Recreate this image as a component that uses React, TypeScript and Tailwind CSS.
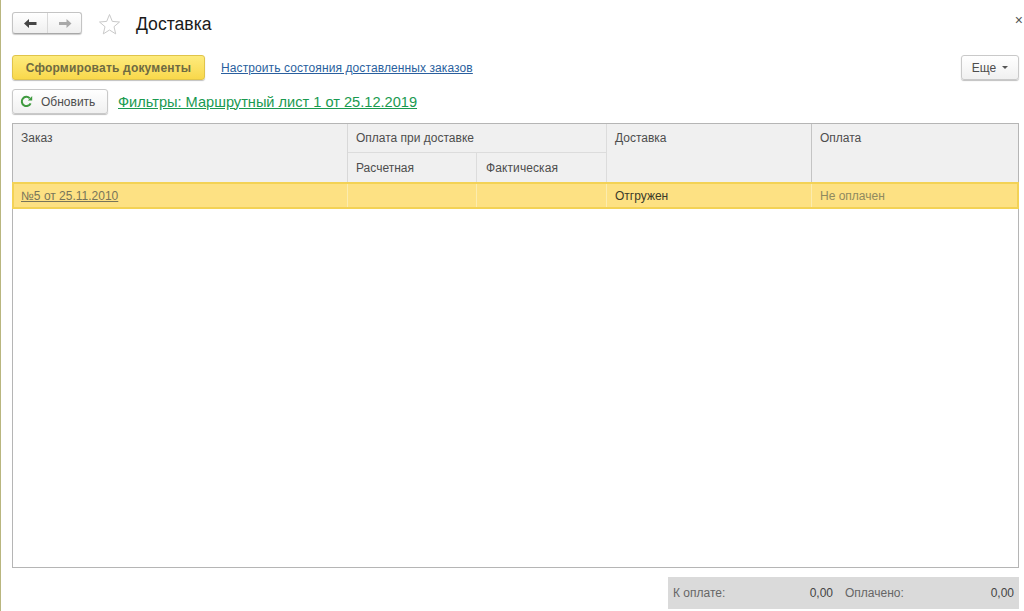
import React from "react";

const font = { fontFamily: '"Liberation Sans", Arial, sans-serif' };

export default function App() {
  return (
    <div
      className="w-[1024px] h-[611px] overflow-hidden bg-white border-l border-l-[#b9b67f] flex flex-col pl-[11px] pr-[4px] font-['Liberation_Sans',sans-serif] text-[12px] text-[#4d4d4d]"
      style={font}
    >
      {/* Title row */}
      <div className="h-[46px] pt-[12px] flex items-start relative shrink-0">
        <div className="flex h-[22px] w-[70px] rounded-[3px] border border-[#c4c4c4] border-b-[#a8a8a8] bg-gradient-to-b from-white to-[#efefef] shadow-[0_1px_1px_rgba(0,0,0,0.2)]">
          <div className="w-[35px] flex items-center justify-center border-r border-r-[#d9d9d9]">
            <svg width="14" height="11" viewBox="0 0 14 11"><path d="M1 5.5L6 1v3h7.5v3H6v3z" fill="#454545" /></svg>
          </div>
          <div className="flex-1 flex items-center justify-center">
            <svg width="14" height="11" viewBox="0 0 14 11"><path d="M13.5 5.5L8.5 1v3H1v3h7.5v3z" fill="#a9a9a9" /></svg>
          </div>
        </div>
        <svg className="ml-[16px] mt-[1px]" width="23" height="22" viewBox="0 0 23 22">
          <path d="M11.5 1.5l2.8 6.9 7.2.6-5.5 4.7 1.7 7.2-6.2-3.9-6.2 3.9 1.7-7.2L1.5 9l7.2-.6z" fill="#fff" stroke="#c9c9c9" strokeWidth="1" />
        </svg>
        <div className="ml-[15px] text-[17.6px] leading-[24px] text-[#1a1a1a]">Доставка</div>
        <div className="absolute -right-[3px] top-[13px] text-[14px] leading-[14px] text-[#555]">×</div>
      </div>

      {/* Command row */}
      <div className="h-[25px] mt-[9px] flex items-center shrink-0 pr-[1px]">
        <button className="w-[193px] h-[25px] rounded-[3px] border border-[#e0c44a] bg-gradient-to-b from-[#fdeb7c] to-[#f9d84a] shadow-[0_1px_1px_rgba(0,0,0,0.25)] font-bold text-[#6e6a42] text-[12px] tracking-[0.2px]">
          Сформировать документы
        </button>
        <a className="ml-[16px] text-[#2a5f9e] underline text-[12px] tracking-[0.1px]">Настроить состояния доставленных заказов</a>
        <button className="ml-auto w-[58px] h-[25px] rounded-[3px] border border-[#c9c9c9] bg-gradient-to-b from-white to-[#f0f0f0] shadow-[0_1px_1px_rgba(0,0,0,0.25)] flex items-center justify-center gap-[6px] text-[#4d4d4d]">
          Еще
          <span className="w-0 h-0 border-x-[3px] border-x-transparent border-t-[3px] border-t-[#555]" />
        </button>
      </div>

      {/* Refresh row */}
      <div className="h-[25px] mt-[9px] flex items-center shrink-0">
        <button className="w-[96px] h-[25px] rounded-[3px] border border-[#c9c9c9] bg-gradient-to-b from-white to-[#f0f0f0] shadow-[0_1px_1px_rgba(0,0,0,0.25)] flex items-center pl-[7px] gap-[8px] text-[#4d4d4d]">
          <svg width="13" height="13" viewBox="0 0 13 13" fill="none">
            <path d="M10.6 8.3A4.6 4.6 0 1 1 9.7 3.2" stroke="#3f9a3f" strokeWidth="2" />
            <path d="M7.8 5.4h4.4V1z" fill="#3f9a3f" />
          </svg>
          Обновить
        </button>
        <a className="ml-[10px] pt-[2px] text-[#1a9a50] underline text-[14.6px]">Фильтры: Маршрутный лист 1 от 25.12.2019</a>
      </div>

      {/* Table */}
      <div className="mt-[9px] h-[445px] w-[1007px] shrink-0 border border-[#b5b5b5] flex flex-col bg-white">
        <div className="grid grid-cols-[335px_129px_130px_205px_1fr] grid-rows-[29px_29px] h-[58px] bg-[#f0f0f0] shrink-0">
          <div className="row-span-2 border-r border-r-[#d8d8d8] pl-[8px] pt-[5px]">Заказ</div>
          <div className="col-span-2 border-r border-b border-[#dcdcdc] pl-[8px] pt-[5px]">Оплата при доставке</div>
          <div className="row-span-2 border-r border-r-[#c4c4c4] pl-[8px] pt-[5px]">Доставка</div>
          <div className="row-span-2 pl-[8px] pt-[5px]">Оплата</div>
          <div className="border-r border-r-[#dcdcdc] pl-[8px] pt-[6px]">Расчетная</div>
          <div className="border-r border-r-[#dcdcdc] pl-[9px] pt-[6px] tracking-[0.1px]">Фактическая</div>
        </div>
        <div className="grid grid-cols-[334px_129px_130px_205px_1fr] h-[27px] -ml-px -mr-px bg-[#fde183] border-2 border-[#f3d255] shrink-0 items-stretch">
          <div className="border-r border-r-[#fcecae] pl-[7px] flex items-center text-[#77745a]">
            <a className="underline">№5 от 25.11.2010</a>
          </div>
          <div className="border-r border-r-[#fcecae]" />
          <div className="border-r border-r-[#fcecae]" />
          <div className="border-r border-r-[#fcecae] pl-[8px] flex items-center text-[#3a3a2a]">Отгружен</div>
          <div className="pl-[8px] flex items-center text-[#8f8a60]">Не оплачен</div>
        </div>
      </div>

      {/* Totals */}
      <div className="mt-[9px] h-[32px] flex justify-end shrink-0 pr-[1px]">
        <div className="w-[351px] h-[32px] bg-[#dadada] flex items-center px-[5px] text-[#666]">
          <span className="w-[60px]">К оплате:</span>
          <span className="w-[100px] text-right text-[#444]">0,00</span>
          <span className="ml-[12px] w-[80px]">Оплачено:</span>
          <span className="flex-1 text-right text-[#444]">0,00</span>
        </div>
      </div>
    </div>
  );
}
